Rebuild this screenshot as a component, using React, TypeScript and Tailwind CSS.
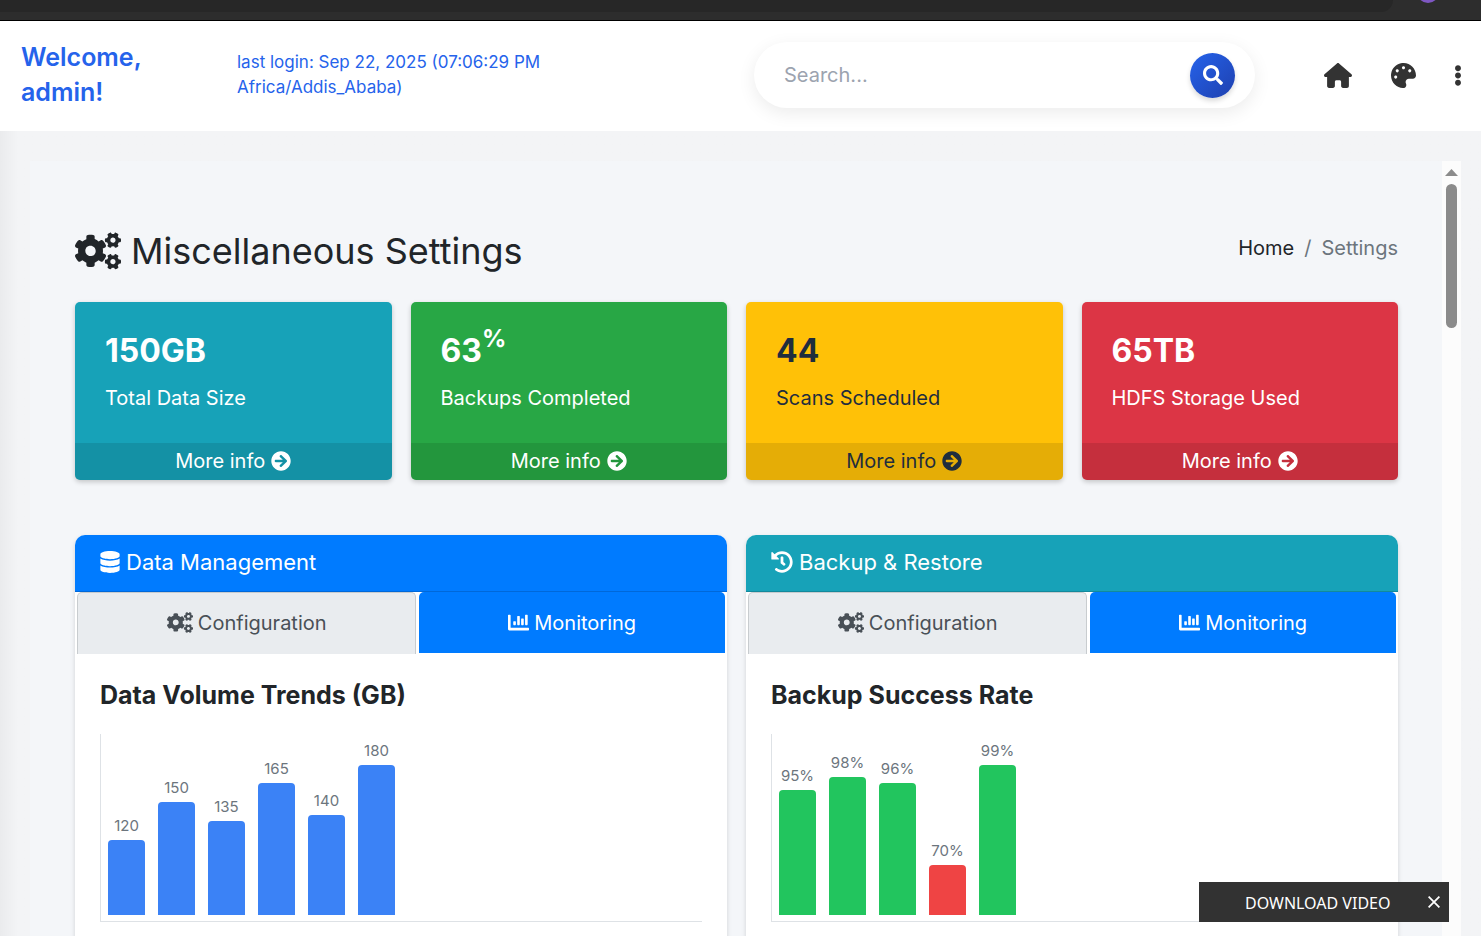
import type { ReactNode } from 'react';
import { FaCogs, FaArrowCircleRight, FaDatabase, FaHistory, FaChartBar, FaPalette, FaEllipsisV, FaSearch } from 'react-icons/fa';
import { FaHouse } from 'react-icons/fa6';

type Stat = { value: string; unit?: string; label: string; bg: string; text: string };

const stats: Stat[] = [
  { value: '150GB', label: 'Total Data Size', bg: 'bg-[#17a2b8]', text: 'text-white' },
  { value: '63', unit: '%', label: 'Backups Completed', bg: 'bg-[#28a745]', text: 'text-white' },
  { value: '44', label: 'Scans Scheduled', bg: 'bg-[#ffc107]', text: 'text-[#1f2d3d]' },
  { value: '65TB', label: 'HDFS Storage Used', bg: 'bg-[#dc3545]', text: 'text-white' },
];

type Bar = { label: string; height: number; color: string };

const volume: Bar[] = [
  { label: '120', height: 75, color: 'bg-[#3b82f6]' },
  { label: '150', height: 113, color: 'bg-[#3b82f6]' },
  { label: '135', height: 94, color: 'bg-[#3b82f6]' },
  { label: '165', height: 132, color: 'bg-[#3b82f6]' },
  { label: '140', height: 100, color: 'bg-[#3b82f6]' },
  { label: '180', height: 150, color: 'bg-[#3b82f6]' },
];

const success: Bar[] = [
  { label: '95%', height: 125, color: 'bg-[#22c55e]' },
  { label: '98%', height: 138, color: 'bg-[#22c55e]' },
  { label: '96%', height: 132, color: 'bg-[#22c55e]' },
  { label: '70%', height: 50, color: 'bg-[#ef4444]' },
  { label: '99%', height: 150, color: 'bg-[#22c55e]' },
];

function StatCard({ stat }: { stat: Stat }) {
  return (
    <article className={`flex flex-col overflow-hidden rounded-[5px] shadow-[0_2px_5px_rgba(0,0,0,0.2)] ${stat.bg} ${stat.text}`}>
      <div className="h-[141px] px-[30px] pt-[25px]">
        <h3 className="flex h-[48px] items-center text-[32px] font-bold">
          {stat.value}
          {stat.unit && <sup className="text-[24px] font-bold">{stat.unit}</sup>}
        </h3>
        <p className="mt-[8px] text-[20px] leading-[30px]">{stat.label}</p>
      </div>
      <a href="#" className="flex h-[37px] items-center justify-center gap-[6px] bg-black/10 pb-[2px] text-[20px]">
        More info <FaArrowCircleRight />
      </a>
    </article>
  );
}

function Chart({ bars }: { bars: Bar[] }) {
  return (
    <div className="flex h-[188px] items-end gap-[13px] border-b border-l border-[#dee2e6] pb-[6px] pl-[7px]">
      {bars.map((bar) => (
        <div key={bar.label} className="flex w-[37px] flex-col items-center">
          <span className="mb-[3px] text-[15px] leading-[22px] text-[#6c757d]">{bar.label}</span>
          <div className={`w-full rounded-t-[4px] ${bar.color}`} style={{ height: bar.height }} />
        </div>
      ))}
    </div>
  );
}

function Panel({ icon, title, header, chartTitle, bars }: { icon: ReactNode; title: string; header: string; chartTitle: string; bars: Bar[] }) {
  return (
    <section className="overflow-hidden rounded-t-[10px] bg-white shadow-[0_2px_5px_rgba(0,0,0,0.14)]">
      <h2 className={`flex h-[57px] items-center gap-[6px] border-b border-black/15 px-[25px] pb-[2px] text-[22px] text-white ${header}`}>
        {icon}
        {title}
      </h2>
      <div role="tablist" className="flex h-[62px] gap-[3px] px-[2px]">
        <button role="tab" aria-selected="false" className="flex grow-[339] basis-0 items-center justify-center gap-[5px] rounded-t-[5px] border border-b-0 border-[#c8cccf] bg-[#e9ecef] pb-[2px] text-[20px] text-[#495057]">
          <FaCogs className="h-[21px] w-[26px]" /> Configuration
        </button>
        <button role="tab" aria-selected="true" className="mb-px flex grow-[307] basis-0 items-center justify-center gap-[5px] rounded-t-[5px] bg-[#007bff] text-[20px] text-white">
          <FaChartBar className="text-[21px]" /> Monitoring
        </button>
      </div>
      <div className="px-[25px] pt-[23px] pb-[60px]">
        <h3 className="mb-[21px] text-[25px] leading-[36px] font-bold">{chartTitle}</h3>
        <Chart bars={bars} />
      </div>
    </section>
  );
}

export default function App() {
  return (
    <div className="flex h-screen flex-col overflow-hidden bg-[#f3f4f6] font-[Inter,sans-serif] text-[#212529]">
      <div className="relative h-[21px] shrink-0 overflow-hidden border-b border-black bg-[#2d2d2d]">
        <div className="mr-[88px] h-[12px] rounded-br-[16px] bg-[#272727]" />
        <div className="absolute -top-[19px] right-[42px] size-[22px] rounded-full bg-[#7e57c2]" />
      </div>

      <header className="flex h-[110px] shrink-0 items-center bg-white pr-[13px] pb-[2px] pl-[21px]">
        <p className="w-[216px] pr-[60px] text-[25px] leading-[35px] font-semibold text-[#2563eb]">Welcome, admin!</p>
        <p className="w-[360px] text-[17px] leading-[25px] text-[#2563eb]">last login: Sep 22, 2025 (07:06:29 PM Africa/Addis_Ababa)</p>
        <form className="ml-auto flex h-[66px] w-[501px] items-center rounded-full bg-white pl-[30px] pr-[20px] shadow-[0_5px_18px_rgba(0,0,0,0.08)]">
          <input type="search" aria-label="Search" placeholder="Search..." className="min-w-0 flex-1 bg-transparent text-[20px] outline-none placeholder:text-[#9ca3af]" />
          <button type="button" aria-label="Submit search" className="flex size-[45px] items-center justify-center rounded-full bg-linear-to-br from-[#2563eb] to-[#1e40af] text-[20px] text-white shadow-[0_3px_5px_rgba(0,0,0,0.15)]">
            <FaSearch />
          </button>
        </form>
        <nav className="ml-[69px] flex items-center text-[25px] text-[#333333]">
          <a href="#" aria-label="Home"><FaHouse className="w-[28px]" /></a>
          <button aria-label="Theme" className="ml-[39px]"><FaPalette /></button>
          <button aria-label="More options" className="ml-[32px]"><FaEllipsisV className="w-[20px] text-[21px]" /></button>
        </nav>
      </header>

      <div className="flex min-h-0 flex-1 bg-linear-to-r from-[#eaebed] to-[#f3f4f6] to-[18px] pt-[30px] pr-[20px] pl-[30px]">
        <main className="min-w-0 flex-1 overflow-hidden bg-[#f4f6f9] pt-[63px] pr-[44px] pl-[45px]">
          <div className="flex h-[54px] items-center justify-between">
            <h1 className="flex items-center gap-[10px] text-[36px]">
              <FaCogs className="size-[46px]" /> Miscellaneous Settings
            </h1>
            <nav aria-label="Breadcrumb" className="flex gap-[10px] pb-[6px] text-[20px] text-[#6c757d]">
              <a href="#" className="text-[#212529]">Home</a>
              <span>/</span>
              <span>Settings</span>
            </nav>
          </div>
          <div className="mt-[24px] grid grid-cols-4 gap-[19px]">
            {stats.map((stat) => <StatCard key={stat.label} stat={stat} />)}
          </div>
          <div className="mt-[55px] grid grid-cols-2 gap-[19px]">
            <Panel icon={<FaDatabase className="w-[20px]" />} title="Data Management" header="bg-[#007bff]" chartTitle="Data Volume Trends (GB)" bars={volume} />
            <Panel icon={<FaHistory className="w-[22px]" />} title="Backup & Restore" header="bg-[#17a2b8]" chartTitle="Backup Success Rate" bars={success} />
          </div>
        </main>
        <div aria-hidden="true" className="flex w-[19px] flex-col items-center bg-[#fcfcfc] pt-[8px]">
          <svg width="13" height="7" viewBox="0 0 13 7" fill="#8b8b8b"><path d="M6.5 0 13 7H0z" /></svg>
          <div className="mt-[8px] h-[144px] w-[11px] rounded-full bg-[#8b8b8b]" />
        </div>
      </div>

      <div className="fixed right-[32px] bottom-[14px] flex h-[40px] w-[250px] items-center bg-[#323232] font-['Noto_Sans',sans-serif] text-white">
        <button className="ml-[46px] pt-[2px] text-[16px]">DOWNLOAD VIDEO</button>
        <button aria-label="Close" className="mr-[9px] ml-auto">
          <svg width="12" height="12" viewBox="0 0 12 12" stroke="currentColor" strokeWidth="1.8"><path d="M.6.6l10.8 10.8M11.4.6.6 11.4" /></svg>
        </button>
      </div>
    </div>
  );
}
